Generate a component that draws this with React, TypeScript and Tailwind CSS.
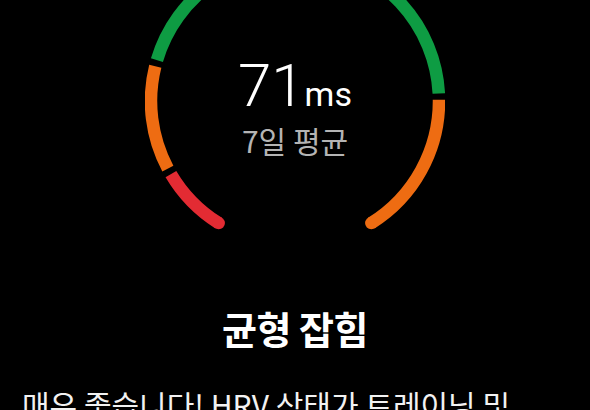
const CX = 150;
const CY = 150;
const R = 144;

type Segment = {
  from: number;
  to: number;
  color: string;
};

// angles in degrees, clockwise from the top of the circle
const segments: Segment[] = [
  { from: 212, to: 239.5, color: "#e32b33" },
  { from: 242, to: 284, color: "#ee6c12" },
  { from: 286.5, to: 447, color: "#0e9c43" },
  { from: 449.5, to: 508, color: "#ee6c12" },
];

function point(deg: number) {
  const rad = (deg * Math.PI) / 180;
  return { x: CX + R * Math.sin(rad), y: CY - R * Math.cos(rad) };
}

function arcPath(from: number, to: number) {
  const a = point(from);
  const b = point(to);
  const large = to - from > 180 ? 1 : 0;
  return `M ${a.x} ${a.y} A ${R} ${R} 0 ${large} 1 ${b.x} ${b.y}`;
}

function HrvGauge() {
  const start = point(segments[0].from);
  const end = point(segments[segments.length - 1].to);

  return (
    <svg
      className="absolute inset-0"
      width={300}
      height={300}
      viewBox="0 0 300 300"
    >
      {segments.map((s) => (
        <path
          key={s.from}
          d={arcPath(s.from, s.to)}
          fill="none"
          stroke={s.color}
          strokeWidth={12.5}
          strokeLinecap="butt"
        />
      ))}
      <circle cx={start.x} cy={start.y} r={6.25} fill={segments[0].color} />
      <circle
        cx={end.x}
        cy={end.y}
        r={6.25}
        fill={segments[segments.length - 1].color}
      />
    </svg>
  );
}

export default function App() {
  return (
    <div className="flex h-[410px] w-[590px] flex-col items-center overflow-hidden bg-black font-['Noto_Sans','Noto_Sans_CJK_KR',sans-serif]">
      <div className="relative -mt-[49px] h-[300px] w-[300px] shrink-0">
        <HrvGauge />
        <div className="relative flex flex-col items-center pt-[105px]">
          <div className="font-['Roboto',sans-serif] text-[60px] font-light leading-[60px] text-white">
            71<span className="text-[34px] font-normal">ms</span>
          </div>
          <p className="mt-[1px] font-['Noto_Sans_CJK_KR',sans-serif] text-[30px] leading-[30px] text-[#b4b4b4]">
            7일 평균
          </p>
        </div>
      </div>

      <h1 className="mt-[55px] font-['Noto_Sans_CJK_KR',sans-serif] text-[38px] font-bold leading-[44px] tracking-[-0.5px] text-white">
        균형 잡힘
      </h1>

      <p className="mt-[34px] self-stretch break-keep pl-[22px] pr-[30px] font-['Noto_Sans_CJK_KR',sans-serif] text-[30px] leading-[40px] text-[#f2f2f2]">
        매우 좋습니다! HRV 상태가 트레이닝 및 회복 사이의 균형이 잘 잡혀 있음을 나타냅니다.
      </p>
    </div>
  );
}
